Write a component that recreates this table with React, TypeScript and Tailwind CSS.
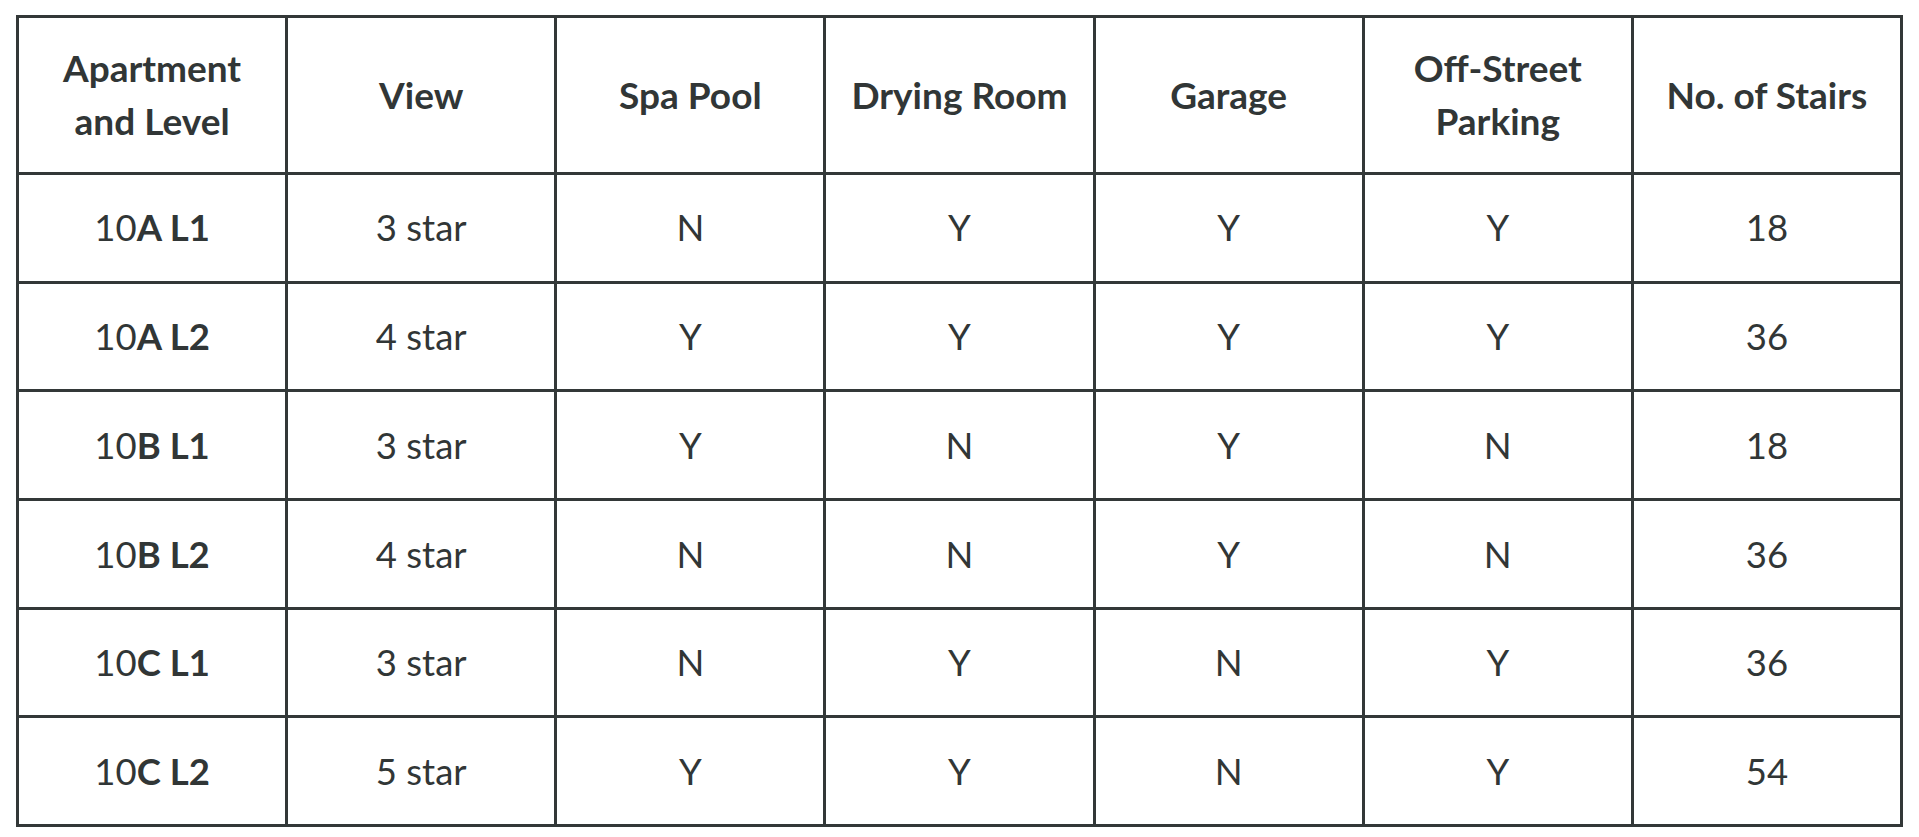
const headers = [
  "Apartment and Level",
  "View",
  "Spa Pool",
  "Drying Room",
  "Garage",
  "Off-Street Parking",
  "No. of Stairs",
];

const rows: { num: string; block: string; level: string; cells: string[] }[] = [
  { num: "10", block: "A", level: "L1", cells: ["3 star", "N", "Y", "Y", "Y", "18"] },
  { num: "10", block: "A", level: "L2", cells: ["4 star", "Y", "Y", "Y", "Y", "36"] },
  { num: "10", block: "B", level: "L1", cells: ["3 star", "Y", "N", "Y", "N", "18"] },
  { num: "10", block: "B", level: "L2", cells: ["4 star", "N", "N", "Y", "N", "36"] },
  { num: "10", block: "C", level: "L1", cells: ["3 star", "N", "Y", "N", "Y", "36"] },
  { num: "10", block: "C", level: "L2", cells: ["5 star", "Y", "Y", "N", "Y", "54"] },
];

export default function App() {
  return (
    <div className="min-h-screen bg-white pl-[16px] pt-[15px] font-['Lato','Noto_Sans',sans-serif] text-[#313636]">
      <div className="grid w-[1887px] grid-cols-7 gap-[3px] bg-[#333838] p-[3px]">
        {headers.map((h) => (
          <div
            key={h}
            className="flex h-[154px] items-center justify-center bg-white px-6 text-center text-[37px] font-bold leading-[1.43]"
          >
            {h === "Apartment and Level" ? (
              <span>
                Apartment
                <br />
                and Level
              </span>
            ) : h === "Off-Street Parking" ? (
              <span>
                Off-Street
                <br />
                Parking
              </span>
            ) : (
              h
            )}
          </div>
        ))}
        {rows.map((r) => (
          <Row key={r.num + r.block + r.level} r={r} />
        ))}
      </div>
    </div>
  );
}

function Row({ r }: { r: { num: string; block: string; level: string; cells: string[] } }) {
  return (
    <>
      <div className="flex h-[105.7px] items-center justify-center bg-white text-[36.5px]">
        <span>
          {r.num}
          <span className="font-bold">
            {r.block} {r.level}
          </span>
        </span>
      </div>
      {r.cells.map((c, i) => (
        <div
          key={i}
          className="flex h-[105.7px] items-center justify-center bg-white text-[36.5px]"
        >
          {c}
        </div>
      ))}
    </>
  );
}
